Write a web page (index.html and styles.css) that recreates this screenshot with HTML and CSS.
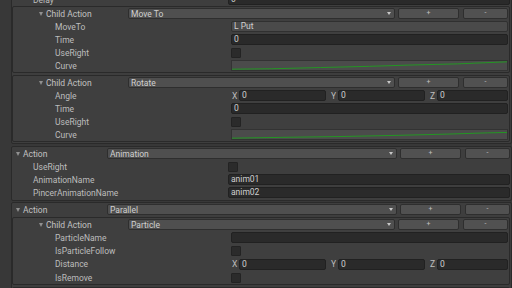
FILE: index.html
```html
<!DOCTYPE html>
<html lang="en">
<head>
    <meta charset="UTF-8">
    <title>Action Inspector</title>
    <link rel="stylesheet" href="styles.css">
</head>
<body>
    <div class="inspector">
        <!-- action with two child actions (top part scrolled away) -->
        <div class="action">
            <div class="row"><span class="label">Delay</span><div class="field text">0</div></div>

            <div class="child">
                <div class="header">
                    <div class="title"><span class="fold"></span>Child Action</div>
                    <div class="popup"><span>Move To</span><span class="arrow"></span></div>
                    <div class="btn plus">+</div>
                    <div class="btn minus">-</div>
                </div>
                <div class="row"><span class="label">MoveTo</span><div class="field object">L Put</div></div>
                <div class="row"><span class="label">Time</span><div class="field text">0</div></div>
                <div class="row"><span class="label">UseRight</span><div class="check"></div></div>
                <div class="row"><span class="label">Curve</span>
                    <div class="field curve">
                        <svg viewBox="0 0 280 11" preserveAspectRatio="none"><polyline points="0,10 40,9.5 90,8 140,6.5 180,5 230,3.5 280,1" /></svg>
                    </div>
                </div>
            </div>

            <div class="child">
                <div class="header">
                    <div class="title"><span class="fold"></span>Child Action</div>
                    <div class="popup"><span>Rotate</span><span class="arrow"></span></div>
                    <div class="btn plus">+</div>
                    <div class="btn minus">-</div>
                </div>
                <div class="row"><span class="label">Angle</span>
                    <div class="vector">
                        <div class="axis"><span>X</span><div class="field text">0</div></div>
                        <div class="axis"><span>Y</span><div class="field text">0</div></div>
                        <div class="axis"><span>Z</span><div class="field text">0</div></div>
                    </div>
                </div>
                <div class="row"><span class="label">Time</span><div class="field text">0</div></div>
                <div class="row"><span class="label">UseRight</span><div class="check"></div></div>
                <div class="row"><span class="label">Curve</span>
                    <div class="field curve">
                        <svg viewBox="0 0 280 11" preserveAspectRatio="none"><polyline points="0,10 50,9 110,8 170,6.5 220,5 260,3.5 280,3" /></svg>
                    </div>
                </div>
            </div>
        </div>

        <div class="action">
            <div class="header">
                <div class="title"><span class="fold"></span>Action</div>
                <div class="popup"><span>Animation</span><span class="arrow"></span></div>
                <div class="btn plus">+</div>
                <div class="btn minus">-</div>
            </div>
            <div class="row"><span class="label">UseRight</span><div class="check"></div></div>
            <div class="row"><span class="label">AnimationName</span><div class="field text">anim01</div></div>
            <div class="row"><span class="label">PincerAnimationName</span><div class="field text">anim02</div></div>
        </div>

        <div class="action tight">
            <div class="header">
                <div class="title"><span class="fold"></span>Action</div>
                <div class="popup"><span>Parallel</span><span class="arrow"></span></div>
                <div class="btn plus">+</div>
                <div class="btn minus">-</div>
            </div>

            <div class="child">
                <div class="header">
                    <div class="title"><span class="fold"></span>Child Action</div>
                    <div class="popup"><span>Particle</span><span class="arrow"></span></div>
                    <div class="btn plus">+</div>
                    <div class="btn minus">-</div>
                </div>
                <div class="row"><span class="label">ParticleName</span><div class="field text"></div></div>
                <div class="row"><span class="label">IsParticleFollow</span><div class="check"></div></div>
                <div class="row tall"><span class="label">Distance</span>
                    <div class="vector">
                        <div class="axis"><span>X</span><div class="field text">0</div></div>
                        <div class="axis"><span>Y</span><div class="field text">0</div></div>
                        <div class="axis"><span>Z</span><div class="field text">0</div></div>
                    </div>
                </div>
                <div class="row"><span class="label">IsRemove</span><div class="check"></div></div>
            </div>

            <div class="child">
                <div class="header">
                    <div class="title"></div>
                    <div class="popup focused"></div>
                </div>
            </div>
        </div>
    </div>
</body>
</html>
```

FILE: styles.css
```css
/* Reset */
body {
    margin: 0;
    width: 512px;
    height: 288px;
    overflow: hidden;
    background: #383838;
    font-family: Roboto, Inter, sans-serif;
    font-size: 8.5px;
    color: #bdbdbd;
}

.inspector {
    margin-top: -8px; /* the first action is scrolled up */
    padding-left: 11px;
}

/* Boxes */
.action {
    background: #3e3e3e;
    border: 1px solid #2a2a2a;
    border-radius: 2px;
    padding-bottom: 1px;
    margin-bottom: 2px;
}

.action.tight {
    margin-top: -1px;
}

.child {
    background: #3f3f3f;
    border: 1px solid #2a2a2a;
    border-radius: 2px;
    margin-right: 1px;
}

.child + .child {
    margin-top: 2px;
}

.header + .child {
    margin-top: 1px;
}

/* Header: fold title, type popup, + and - buttons */
.header {
    display: flex;
    align-items: center;
    height: 13px;
    padding-right: 1px;
}

.title {
    display: flex;
    align-items: center;
    flex: 0 0 95px;
    box-sizing: border-box;
    padding-left: 4px;
    color: #c2c2c2;
}

.child .title {
    flex-basis: 115px;
    padding-left: 26px;
}

.fold {
    width: 0;
    height: 0;
    border-left: 2.5px solid transparent;
    border-right: 2.5px solid transparent;
    border-top: 4px solid #909090;
    margin-right: 3px;
}

.popup {
    flex: 1;
    height: 11px;
    display: flex;
    align-items: center;
    justify-content: space-between;
    box-sizing: border-box;
    padding-left: 2px;
    background: #4f4f4f;
    border: 1px solid #2e2e2e;
    border-radius: 2px;
    color: #d0d0d0;
}

.popup.focused {
    border-color: #3d6ea5;
    margin-right: 110px;
}

.arrow {
    width: 0;
    height: 0;
    border-left: 2.5px solid transparent;
    border-right: 2.5px solid transparent;
    border-top: 3px solid #c8c8c8;
    margin-right: 3px;
}

.btn {
    height: 11px;
    box-sizing: border-box;
    background: #515151;
    border: 1px solid #2e2e2e;
    border-radius: 2px;
    color: #c0c0c0;
    font-size: 7px;
    line-height: 9px;
    text-align: center;
}

.plus {
    flex: 0 0 61px;
    margin-left: 3px;
}

.minus {
    flex: 0 0 45px;
    margin-left: 4px;
}

/* Property rows */
.row {
    display: flex;
    align-items: center;
    height: 13px;
    padding-right: 1px;
}

.row.tall {
    height: 14px;
}

.label {
    flex: 0 0 216px;
    box-sizing: border-box;
    padding-left: 21px;
    white-space: nowrap;
}

.child .label {
    flex-basis: 218px;
    padding-left: 42px;
}

.field {
    flex: 1;
    height: 11px;
    box-sizing: border-box;
    border-radius: 2px;
    line-height: 9px;
    padding-left: 2px;
    color: #cfcfcf;
    overflow: hidden;
}

.field.text {
    background: #2a2a2a;
    border: 1px solid #212121;
}

.field.object {
    background: #4a4a4a;
    border: 1px solid #303030;
}

.field.curve {
    padding: 0;
    background: #4b4b4b;
    border: 1px solid #333;
    border-radius: 0;
}

.curve svg {
    display: block;
    width: 100%;
    height: 100%;
}

.curve polyline {
    fill: none;
    stroke: #1f9e1f;
    stroke-width: 1;
}

.check {
    width: 10px;
    height: 10px;
    box-sizing: border-box;
    background: #2b2b2b;
    border: 1px solid #232323;
    border-radius: 1px;
}

/* Vector3 fields */
.vector {
    flex: 1;
    display: flex;
    gap: 4px;
}

.axis {
    display: flex;
    align-items: center;
    flex: 0 0 95px;
}

.axis:last-child {
    flex: 1;
}

.axis span {
    width: 8px;
    padding-left: 1px;
    box-sizing: border-box;
}
```
